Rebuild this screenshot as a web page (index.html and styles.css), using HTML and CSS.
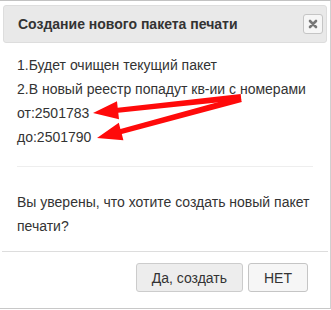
FILE: index.html
```html
<!DOCTYPE html>
<html lang="ru">
<head>
<meta charset="utf-8">
<title>Создание нового пакета печати</title>
<link rel="stylesheet" href="styles.css">
</head>
<body>
<div class="dialog">
  <div class="titlebar">
    <span class="title">Создание нового пакета печати</span>
    <button class="close" type="button" aria-label="Закрыть">
      <svg width="10" height="10" viewBox="0 0 10 10"><path d="M2 2L8 8M8 2L2 8" stroke="#777" stroke-width="2.6" stroke-linecap="round"/></svg>
    </button>
  </div>
  <div class="content">
    <div class="line">1.Будет очищен текущий пакет</div>
    <div class="line">2.В новый реестр попадут кв-ии с номерами</div>
    <div class="line">от:2501783</div>
    <div class="line">до:2501790</div>
    <hr class="sep">
    <div class="question">Вы уверены, что хотите создать новый пакет печати?</div>
  </div>
  <div class="buttonpane">
    <button class="btn btn-active" type="button">Да, создать</button>
    <button class="btn" type="button">НЕТ</button>
  </div>
  <svg class="arrows" width="331" height="310" viewBox="0 0 331 310">
    <polygon fill="#ff0a0a" points="93,113 117,101.3 117.7,107.8 240.7,94 241.3,100 118.3,112.8 119,119.3"/>
    <polygon fill="#ff0a0a" points="97,138 118.8,122.8 120.4,129.1 240.2,96.1 241.8,101.9 121.8,133.9 123.4,140.2"/>
  </svg>
</div>
</body>
</html>
```
FILE: styles.css
```css
html, body {
  margin: 0;
  padding: 0;
  background: #fff;
}
body {
  font-family: "Liberation Sans", Arial, sans-serif;
  font-size: 14px;
  color: #333;
}
.dialog {
  position: relative;
  width: 331px;
  height: 309px;
  box-sizing: border-box;
  border-top: 1px solid #c2c2c2;
  border-right: 1px solid #d0d0d0;
  border-bottom: 1px solid #c8c8c8;
  padding: 4px 3px 0 3px;
  display: flex;
  flex-direction: column;
  background: #fff;
}
.titlebar {
  height: 38px;
  box-sizing: border-box;
  border: 1px solid #dddddd;
  background: #e9e9e9;
  border-radius: 3px;
  display: flex;
  align-items: center;
  justify-content: space-between;
  padding: 0 3px 0 14px;
}
.title {
  font-weight: bold;
  font-size: 14px;
  color: #333;
}
.close {
  width: 20px;
  height: 20px;
  box-sizing: border-box;
  border: 1px solid #c5c5c5;
  background: #f6f6f6;
  border-radius: 3px;
  padding: 0;
  display: flex;
  align-items: center;
  justify-content: center;
  margin: 0;
}
.content {
  padding: 10px 14px 0 14px;
  line-height: 24px;
}
.sep {
  border: 0;
  border-top: 1px solid #eeeeee;
  margin: 17px 0 23px 0;
  height: 0;
}
.question {
  line-height: 24px;
}
.buttonpane {
  margin: 13px -1px 0 -1px;
  border-top: 1px solid #dddddd;
  padding: 11px 20px 0 0;
  display: flex;
  justify-content: flex-end;
  gap: 5px;
}
.btn {
  font-family: "Liberation Sans", Arial, sans-serif;
  font-size: 14px;
  color: #333;
  height: 29px;
  box-sizing: border-box;
  padding: 0 15px;
  border: 1px solid #c5c5c5;
  background: #f6f6f6;
  border-radius: 3px;
  margin: 0;
}
.btn-active {
  background: #ededed;
  border-color: #cccccc;
}
.arrows {
  position: absolute;
  left: 0;
  top: -1px;
  pointer-events: none;
}
```
